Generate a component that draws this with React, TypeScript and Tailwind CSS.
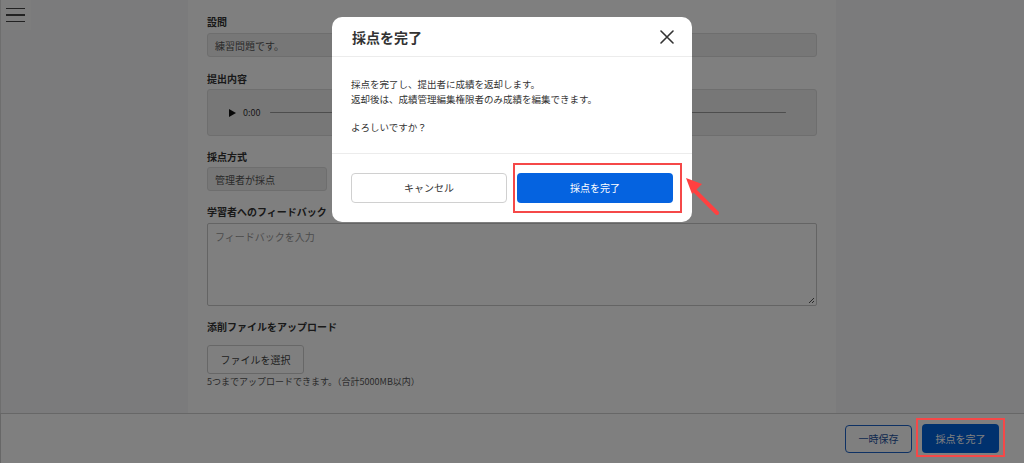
import React from "react";

const font = { fontFamily: '"Noto Sans CJK JP", "Noto Sans", sans-serif' };

function Label({ children }: { children: React.ReactNode }) {
  return <div className="h-[16px] leading-[16px] text-[10px] font-bold text-[#333]">{children}</div>;
}

export default function App() {
  return (
    <div className="relative w-[1024px] h-[463px] overflow-hidden bg-white" style={font}>
      <div className="flex h-[413px]">
        <aside className="w-[188px] bg-[#f6f6f8] border-l border-[#dcdcdc]">
          <div className="w-[30px] h-[30px] bg-[#fbfbfb] flex flex-col justify-center gap-[5px] pl-[5px]">
            <div className="w-[19px] h-[1.5px] bg-[#444]" />
            <div className="w-[19px] h-[1.5px] bg-[#444]" />
            <div className="w-[19px] h-[1.5px] bg-[#444]" />
          </div>
        </aside>
        <main className="w-[648px] bg-white pl-[19px] pr-[19px] pt-[14px]">
          <Label>設問</Label>
          <div className="mt-[3px] h-[24px] border border-[#dcdcdc] rounded-[3px] bg-[#efefef] px-[7px] flex items-center text-[10px] text-[#555]">
            練習問題です。
          </div>
          <div className="mt-[14px]">
            <Label>提出内容</Label>
          </div>
          <div className="mt-[2px] h-[47px] border border-[#dcdcdc] rounded-[3px] bg-[#efefef] flex items-center pl-[21px] pr-[30px] gap-[7px]">
            <svg width="7" height="8" viewBox="0 0 7 8"><path d="M0 0 L7 4 L0 8 Z" fill="#111" /></svg>
            <span className="text-[9px] text-[#333] w-[20px]">0:00</span>
            <div className="flex-1 h-[1.5px] bg-[#9a9a9a] rounded" />
          </div>
          <div className="mt-[13px]">
            <Label>採点方式</Label>
          </div>
          <div className="mt-[2px] w-[120px] h-[24px] border border-[#dcdcdc] rounded-[3px] bg-[#efefef] px-[7px] flex items-center text-[10px] text-[#555]">
            管理者が採点
          </div>
          <div className="mt-[13px]">
            <Label>学習者へのフィードバック</Label>
          </div>
          <div className="relative mt-[3px] h-[83px] border border-[#c8c8c8] rounded-[2px] bg-white px-[7px] pt-[5px] text-[10px] text-[#999]">
            フィードバックを入力
            <svg className="absolute right-[1px] bottom-[1px]" width="7" height="7" viewBox="0 0 7 7">
              <path d="M6 1 L1 6 M6 4 L4 6" stroke="#555" strokeWidth="1" />
            </svg>
          </div>
          <div className="mt-[13px]">
            <Label>添削ファイルをアップロード</Label>
          </div>
          <button className="mt-[10px] w-[97px] h-[29px] border border-[#cfcfcf] rounded-[3px] bg-white text-[10px] text-[#444]">
            ファイルを選択
          </button>
          <div className="mt-[1px] text-[9px] leading-[14px] text-[#555]">
            5つまでアップロードできます。（合計5000MB以内）
          </div>
        </main>
        <div className="flex-1 bg-[#f6f6f8]" />
      </div>
      <footer className="h-[50px] border-t border-[#cfcfcf] border-l bg-white flex items-center justify-end pr-[19px] gap-[4px]">
        <button className="w-[67px] h-[28px] border border-[#1d63c8] rounded-[4px] bg-white text-[10px] text-[#1a4f9e]">
          一時保存
        </button>
        <div className="border-2 border-transparent p-[4px]">
          <button className="w-[77px] h-[29px] rounded-[4px] bg-[#0062dc] text-[10px] text-white">
            採点を完了
          </button>
        </div>
      </footer>

      <div className="absolute inset-0 bg-black/50" />

      <div className="absolute left-[916px] top-[418px] w-[89px] h-[39px] border-2 border-[#f54848]" />

      <div className="absolute left-[332px] top-[17px] w-[360px] h-[205px] rounded-[10px] bg-white flex flex-col">
        <div className="h-[40px] border-b border-[#ececec] flex items-center justify-between pl-[20px] pr-[18px]">
          <span className="text-[14px] font-bold text-[#333] pt-[1px]">採点を完了</span>
          <svg width="14" height="14" viewBox="0 0 14 14">
            <path d="M1 1 L13 13 M13 1 L1 13" stroke="#333" strokeWidth="1.6" strokeLinecap="round" />
          </svg>
        </div>
        <div className="h-[97px] border-b border-[#ececec] pl-[19px] pt-[20px] text-[9.5px] leading-[15px] text-[#333]">
          <div>採点を完了し、提出者に成績を返却します。</div>
          <div>返却後は、成績管理編集権限者のみ成績を編集できます。</div>
          <div className="mt-[13px]">よろしいですか？</div>
        </div>
        <div className="flex-1 flex items-center px-[19px] gap-[10px] pb-[1px]">
          <button className="w-[156px] h-[30px] border border-[#d0d0d0] rounded-[4px] bg-white text-[10px] text-[#333]">
            キャンセル
          </button>
          <button className="w-[156px] h-[30px] rounded-[4px] bg-[#0563e0] text-[10px] text-white">
            採点を完了
          </button>
        </div>
        <div className="absolute left-[181px] top-[146px] w-[169px] h-[50px] border-2 border-[#f54848]" />
      </div>

      <svg className="absolute left-[680px] top-[170px]" width="50" height="50" viewBox="0 0 50 50">
        <path d="M37 43 L14 20" stroke="#ff4040" strokeWidth="4" strokeLinecap="round" />
        <path d="M6 8 L22 14 L12 24 Z" fill="#ff4040" />
      </svg>
    </div>
  );
}
